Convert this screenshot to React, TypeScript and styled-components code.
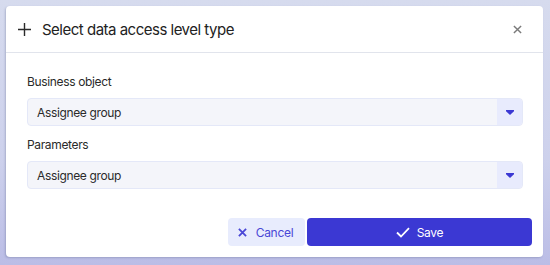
import { createGlobalStyle, styled } from 'styled-components';

const GlobalStyle = createGlobalStyle`
  * { box-sizing: border-box; }
  html, body {
    margin: 0;
    padding: 0;
    width: 550px;
    height: 265px;
    overflow: hidden;
  }
  body {
    font-family: Inter, "Noto Sans", "Liberation Sans", sans-serif;
    background: linear-gradient(180deg, #d6dbee 0%, #cdd1ec 60%, #bbbde6 100%);
  }
`;

const Backdrop = styled.div`
  padding: 6px 7px 8px 6px;
`;

const Dialog = styled.div`
  width: 537px;
  height: 251px;
  background-color: #fff;
  border-radius: 4px;
  box-shadow: -1px 1px 2px rgba(60, 70, 110, 0.25);
  display: flex;
  flex-direction: column;
`;

const Header = styled.header`
  height: 47px;
  display: flex;
  align-items: center;
  padding: 1px 21px 0 12px;
  border-bottom: 1px solid #e1e4ec;
`;

const Title = styled.h2`
  flex: 1;
  margin: 0 0 0 11px;
  font-size: 15px;
  font-weight: 400;
  color: #222;
  letter-spacing: -0.5px;
`;

const IconButton = styled.button`
  border: none;
  background: none;
  padding: 0;
  display: flex;
  color: #7a7a7a;
  cursor: pointer;
`;

const Body = styled.section`
  padding: 21px 20px 0 21px;
  display: flex;
  flex-direction: column;
  gap: 11px;
`;

const Field = styled.div`
  display: flex;
  flex-direction: column;
  gap: 8px;
`;

const Label = styled.label`
  font-size: 12px;
  line-height: 16px;
  color: #2a2a2a;
  letter-spacing: -0.35px;
`;

const Select = styled.div`
  height: 28px;
  display: flex;
  align-items: stretch;
  background-color: #f4f5fa;
  border: 1px solid #e4e8f8;
  border-radius: 4px;
  overflow: hidden;
`;

const SelectValue = styled.div`
  flex: 1;
  display: flex;
  align-items: center;
  padding-left: 9px;
  font-size: 12px;
  color: #2a2a2a;
  letter-spacing: -0.35px;
`;

const SelectToggle = styled.div`
  width: 25px;
  display: flex;
  align-items: center;
  justify-content: center;
  background-color: #e8ebfd;
  color: #3b38d3;
`;

const Footer = styled.footer`
  margin-top: auto;
  padding: 0 11px 11px 0;
  display: flex;
  justify-content: flex-end;
  gap: 2px;
`;

const Button = styled.button<{ $primary?: boolean }>`
  height: 28px;
  width: ${(p) => (p.$primary ? '225px' : '77px')};
  border: none;
  border-radius: 4px;
  display: flex;
  align-items: center;
  justify-content: center;
  gap: ${(p) => (p.$primary ? '7px' : '9px')};
  font-family: inherit;
  font-size: 12px;
  letter-spacing: -0.3px;
  cursor: pointer;
  background-color: ${(p) => (p.$primary ? '#3b38d3' : '#e8ecfd')};
  color: ${(p) => (p.$primary ? '#fff' : '#4a47d6')};
  padding: 0;
  padding-right: ${(p) => (p.$primary ? '0' : '2px')};
`;

const PlusIcon = () => (
  <svg width='13' height='13' viewBox='0 0 13 13'>
    <path d='M6.5 0v13M0 6.5h13' stroke='#2a2a2a' strokeWidth='1.4' />
  </svg>
);

const CloseIcon = ({ size = 9, width = 1.6 }: { size?: number; width?: number }) => (
  <svg width={size} height={size} viewBox='0 0 10 10'>
    <path d='M1 1l8 8M9 1l-8 8' stroke='currentColor' strokeWidth={width} />
  </svg>
);

const CheckIcon = () => (
  <svg width='14' height='11' viewBox='0 0 14 11'>
    <path d='M1 5.5l4 4L13 1.2' stroke='#fff' strokeWidth='1.8' fill='none' />
  </svg>
);

const Caret = () => (
  <svg width='8' height='5' viewBox='0 0 8 5'>
    <path d='M0 0h8v1.2L4 5 0 1.2z' fill='currentColor' />
  </svg>
);

type SelectFieldProps = {
  label: string;
  value: string;
};

const SelectField = ({ label, value }: SelectFieldProps) => (
  <Field>
    <Label>{label}</Label>
    <Select>
      <SelectValue>{value}</SelectValue>
      <SelectToggle>
        <Caret />
      </SelectToggle>
    </Select>
  </Field>
);

const App = () => {
  return (
    <>
      <GlobalStyle />
      <Backdrop>
        <Dialog role='dialog'>
          <Header>
            <PlusIcon />
            <Title>Select data access level type</Title>
            <IconButton aria-label='close'>
              <CloseIcon />
            </IconButton>
          </Header>
          <Body>
            <SelectField label='Business object' value='Assignee group' />
            <SelectField label='Parameters' value='Assignee group' />
          </Body>
          <Footer>
            <Button>
              <CloseIcon size={9} width={2} />
              Cancel
            </Button>
            <Button $primary>
              <CheckIcon />
              Save
            </Button>
          </Footer>
        </Dialog>
      </Backdrop>
    </>
  );
};

export default App;
